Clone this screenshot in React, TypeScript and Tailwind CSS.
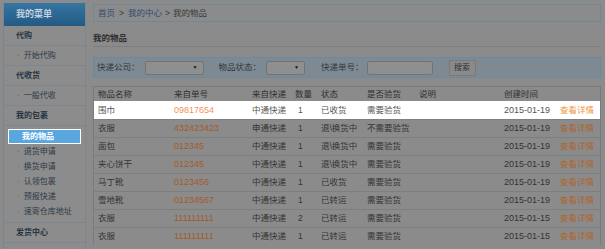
import React from "react";

const font = "font-['Liberation_Sans','Noto_Sans_CJK_SC',sans-serif]";

const menu = [
  { title: "代购", items: ["开始代购"] },
  { title: "代收货", items: ["一般代收"] },
  {
    title: "我的包裹",
    items: ["我的物品", "退货申请", "换货申请", "认领包裹", "预报快递", "速寄仓库地址"],
  },
  { title: "发货中心", items: [] },
];

const rows = [
  { name: "围巾", no: "09817654", express: "中通快递", qty: "1", status: "已收货", check: "需要验货", date: "2015-01-19", active: true },
  { name: "衣服", no: "432423423", express: "申通快递", qty: "1", status: "退\\换货中", check: "不需要验货", date: "2015-01-19" },
  { name: "面包", no: "012345", express: "中通快递", qty: "1", status: "退\\换货中", check: "需要验货", date: "2015-01-19" },
  { name: "夹心饼干", no: "012345", express: "中通快递", qty: "1", status: "退\\换货中", check: "需要验货", date: "2015-01-19" },
  { name: "马丁靴", no: "0123456", express: "中通快递", qty: "1", status: "已收货", check: "需要验货", date: "2015-01-19" },
  { name: "雪地靴", no: "01234567", express: "中通快递", qty: "1", status: "已转运", check: "需要验货", date: "2015-01-19" },
  { name: "衣服", no: "111111111", express: "中通快递", qty: "2", status: "已转运", check: "需要验货", date: "2015-01-15" },
  { name: "衣服", no: "111111111", express: "中通快递", qty: "1", status: "已转运", check: "需要验货", date: "2015-01-15" },
];

const cols = "grid grid-cols-[76px_78px_43px_26px_46px_52px_85px_56px_1fr] items-center pl-[4px]";

function Sidebar() {
  return (
    <div className="w-[83px] shrink-0 flex flex-col border-r border-l border-[#7b8690] bg-[#8c8c8c]">
      <div className="h-[23px] flex items-center pl-[12px] bg-gradient-to-b from-[#3675a3] to-[#245a84] text-[9px] font-bold text-[#c5d1dc]">
        我的菜单
      </div>
      {menu.map((m) => (
        <div key={m.title} className="flex flex-col">
          <div className="h-[20px] flex items-center pl-[12px] border-b border-[#7b8690] text-[8px] font-bold text-[#263443]">
            {m.title}
          </div>
          {m.title === "我的包裹" ? (
            <div className="flex flex-col pt-[3px] pb-[3px] border-b border-[#7b8690]">
              {m.items.map((it) =>
                it === "我的物品" ? (
                  <div
                    key={it}
                    className="mx-[4px] h-[15px] flex items-center pl-[13px] bg-[#5aa7df] border border-white text-[8px] font-bold text-white"
                  >
                    {it}
                  </div>
                ) : (
                  <div key={it} className="h-[15px] flex items-center pl-[13px] text-[8px] text-[#2c3a48]">
                    <span className="mr-[4px] text-[#4e5a64]">·</span>
                    {it}
                  </div>
                )
              )}
            </div>
          ) : (
            m.items.map((it) => (
              <div
                key={it}
                className="h-[20px] flex items-center pl-[13px] border-b border-[#7b8690] text-[8px] text-[#2c3a48]"
              >
                <span className="mr-[4px] text-[#4e5a64]">·</span>
                {it}
              </div>
            ))
          )}
        </div>
      ))}
      <div className="flex-1" />
    </div>
  );
}

function Select({ w }: { w: string }) {
  return (
    <div className={`${w} h-[14px] flex items-center justify-end pr-[5px] bg-[#8f8f8f] border border-[#737373] rounded-[2px]`}>
      <span className="text-[5px] text-[#111]">▼</span>
    </div>
  );
}

export default function App() {
  return (
    <div className={`${font} w-[605px] h-[249px] overflow-hidden bg-[#8b8b8b] flex pt-[3px] pl-[3px]`}>
      <Sidebar />
      <div className="ml-[7px] w-[508px] flex flex-col">
        <div className="mt-[1px] h-[18px] border border-[#6f8797] flex items-center pl-[4px] text-[8.5px] text-[#3a3a3a]">
          <span className="text-[#2d4b74]">首页</span>
          <span className="mx-[4px]">&gt;</span>
          <span className="text-[#2d4b74]">我的中心</span>
          <span className="mx-[3px]">&gt;</span>
          <span>我的物品</span>
        </div>
        <div className="mt-[10px] h-[15px] flex items-center text-[8.5px] font-bold text-[#2f2f2f] border-b border-[#7e7e7e] pb-[1px]">
          我的物品
        </div>
        <div className="mt-[10px] h-[21px] border border-[#6b8aa0] bg-[#7e8a93] flex items-center pl-[3px] text-[8.5px] text-[#2e3740]">
          <span>快递公司：</span>
          <div className="ml-[5px]">
            <Select w="w-[59px]" />
          </div>
          <span className="ml-[15px]">物品状态：</span>
          <div className="ml-[5px]">
            <Select w="w-[39px]" />
          </div>
          <span className="ml-[16px]">快递单号：</span>
          <div className="ml-[3px] w-[66px] h-[14px] bg-[#8f8f8f] border border-[#737373] rounded-[2px]" />
          <div className="ml-[16px] w-[27px] h-[16px] flex items-center justify-center bg-[#8a8a8a] border border-[#7a7a7a] text-[8px] text-[#333]">
            搜索
          </div>
        </div>
        <div className="mt-[8px] border border-[#7a7a7a] border-b-0 flex flex-col text-[8.5px]">
          <div className={`${cols} h-[14px] text-[#2f2f2f]`}>
            <span>物品名称</span>
            <span>来自单号</span>
            <span>来自快递</span>
            <span>数量</span>
            <span>状态</span>
            <span>是否验货</span>
            <span>说明</span>
            <span>创建时间</span>
            <span />
          </div>
          {rows.map((r, i) => (
            <div
              key={i}
              className={`${cols} h-[18px] border-t ${
                r.active ? "bg-white text-[#555] border-white" : "text-[#333] border-[#7e7e7e]"
              }`}
            >
              <span>{r.name}</span>
              <span className={`text-[9px] ${r.active ? "text-[#f4925a]" : "text-[#a55a27]"}`}>{r.no}</span>
              <span>{r.express}</span>
              <span className="pl-[3px]">{r.qty}</span>
              <span>{r.status}</span>
              <span>{r.check}</span>
              <span />
              <span className="text-[9px]">{r.date}</span>
              <span className={r.active ? "text-[#f39542]" : "text-[#ad652b]"}>查看详情</span>
            </div>
          ))}
        </div>
      </div>
    </div>
  );
}
